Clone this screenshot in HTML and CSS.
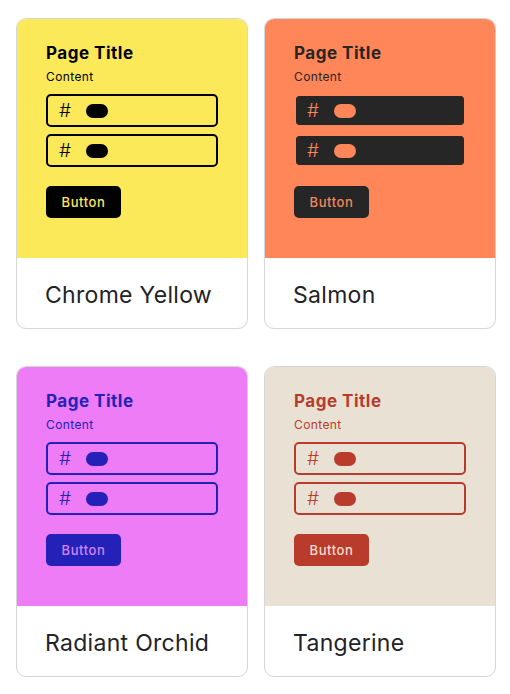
FILE: index.html
```html
<!DOCTYPE html>
<html>
<head>
	<meta name="viewport" content="width=device-width, initial-scale=1.0">
	<link rel="stylesheet" href="styles.css">
	<title>Themes</title>
</head>
<body>
	<div class="grid">
		<div class="card yellow">
			<div class="preview">
				<div class="page-title">Page Title</div>
				<div class="content">Content</div>
				<div class="field"><span class="hash">#</span><span class="pill"></span></div>
				<div class="field"><span class="hash">#</span><span class="pill"></span></div>
				<div class="btn">Button</div>
			</div>
			<div class="name">Chrome Yellow</div>
		</div>

		<div class="card salmon">
			<div class="preview">
				<div class="page-title">Page Title</div>
				<div class="content">Content</div>
				<div class="field"><span class="hash">#</span><span class="pill"></span></div>
				<div class="field"><span class="hash">#</span><span class="pill"></span></div>
				<div class="btn">Button</div>
			</div>
			<div class="name">Salmon</div>
		</div>

		<div class="card orchid">
			<div class="preview">
				<div class="page-title">Page Title</div>
				<div class="content">Content</div>
				<div class="field"><span class="hash">#</span><span class="pill"></span></div>
				<div class="field"><span class="hash">#</span><span class="pill"></span></div>
				<div class="btn">Button</div>
			</div>
			<div class="name">Radiant Orchid</div>
		</div>

		<div class="card tangerine">
			<div class="preview">
				<div class="page-title">Page Title</div>
				<div class="content">Content</div>
				<div class="field"><span class="hash">#</span><span class="pill"></span></div>
				<div class="field"><span class="hash">#</span><span class="pill"></span></div>
				<div class="btn">Button</div>
			</div>
			<div class="name">Tangerine</div>
		</div>
	</div>
</body>
</html>
```

FILE: styles.css
```css
body {
	margin: 18px 0 0 16px;
	background-color: white;
	font-family: Inter, "Noto Sans", sans-serif;
}

.grid {
	display: grid;
	grid-template-columns: 232px 232px;
	column-gap: 16px;
	row-gap: 37px;
}

.card {
	border: 1px solid #d6d6d6;
	border-radius: 10px;
	overflow: hidden;
	background-color: white;
}

.preview {
	height: 239px;
	box-sizing: border-box;
	padding: 24px 29px 0 29px;
	background-color: var(--bg);
	color: var(--fg);
}

.page-title {
	font-size: 17px;
	font-weight: 700;
	letter-spacing: 0.5px;
	line-height: 21px;
}

.content {
	font-size: 12px;
	letter-spacing: 0.4px;
	line-height: 15px;
	margin-top: 5px;
	margin-bottom: 10px;
}

.field {
	width: 172px;
	height: 33px;
	box-sizing: border-box;
	border: 2px solid var(--line);
	border-radius: 5px;
	background-color: var(--field);
	background-clip: padding-box;
	display: flex;
	align-items: center;
	padding-left: 11px;
	margin-bottom: 7px;
}

.hash {
	font-size: 19px;
	font-weight: 300;
	color: var(--mark);
	width: 12px;
	margin-right: 15px;
}

.pill {
	width: 22px;
	height: 14px;
	border-radius: 7px;
	background-color: var(--mark);
}

.btn {
	display: inline-block;
	margin-top: 12px;
	width: 75px;
	height: 32px;
	line-height: 32px;
	text-align: center;
	box-sizing: border-box;
	border-radius: 5px;
	font-size: 13px;
	font-weight: 500;
	letter-spacing: 0.6px;
	background-color: var(--btn);
	color: var(--btn-text);
}

.name {
	height: 70px;
	box-sizing: border-box;
	padding: 3px 0 0 28px;
	display: flex;
	align-items: center;
	font-size: 23px;
	letter-spacing: 0.3px;
	color: #222326;
}

.yellow {
	--bg: #fbe95a;
	--fg: #000;
	--line: #000;
	--field: transparent;
	--mark: #000;
	--btn: #000;
	--btn-text: #fbe95a;
}

.salmon {
	--bg: #ff8659;
	--fg: #2a2522;
	--line: #ff8659;
	--field: #262626;
	--mark: #ff8659;
	--btn: #262626;
	--btn-text: #f2875f;
}

.orchid {
	--bg: #ee7cf6;
	--fg: #2421b8;
	--line: #2421b8;
	--field: transparent;
	--mark: #2421b8;
	--btn: #2421b8;
	--btn-text: #d384f2;
}

.tangerine {
	--bg: #e9e2d4;
	--fg: #b83b2c;
	--line: #b83b2c;
	--field: transparent;
	--mark: #b83b2c;
	--btn: #b83b2c;
	--btn-text: #f5dccf;
}
```
